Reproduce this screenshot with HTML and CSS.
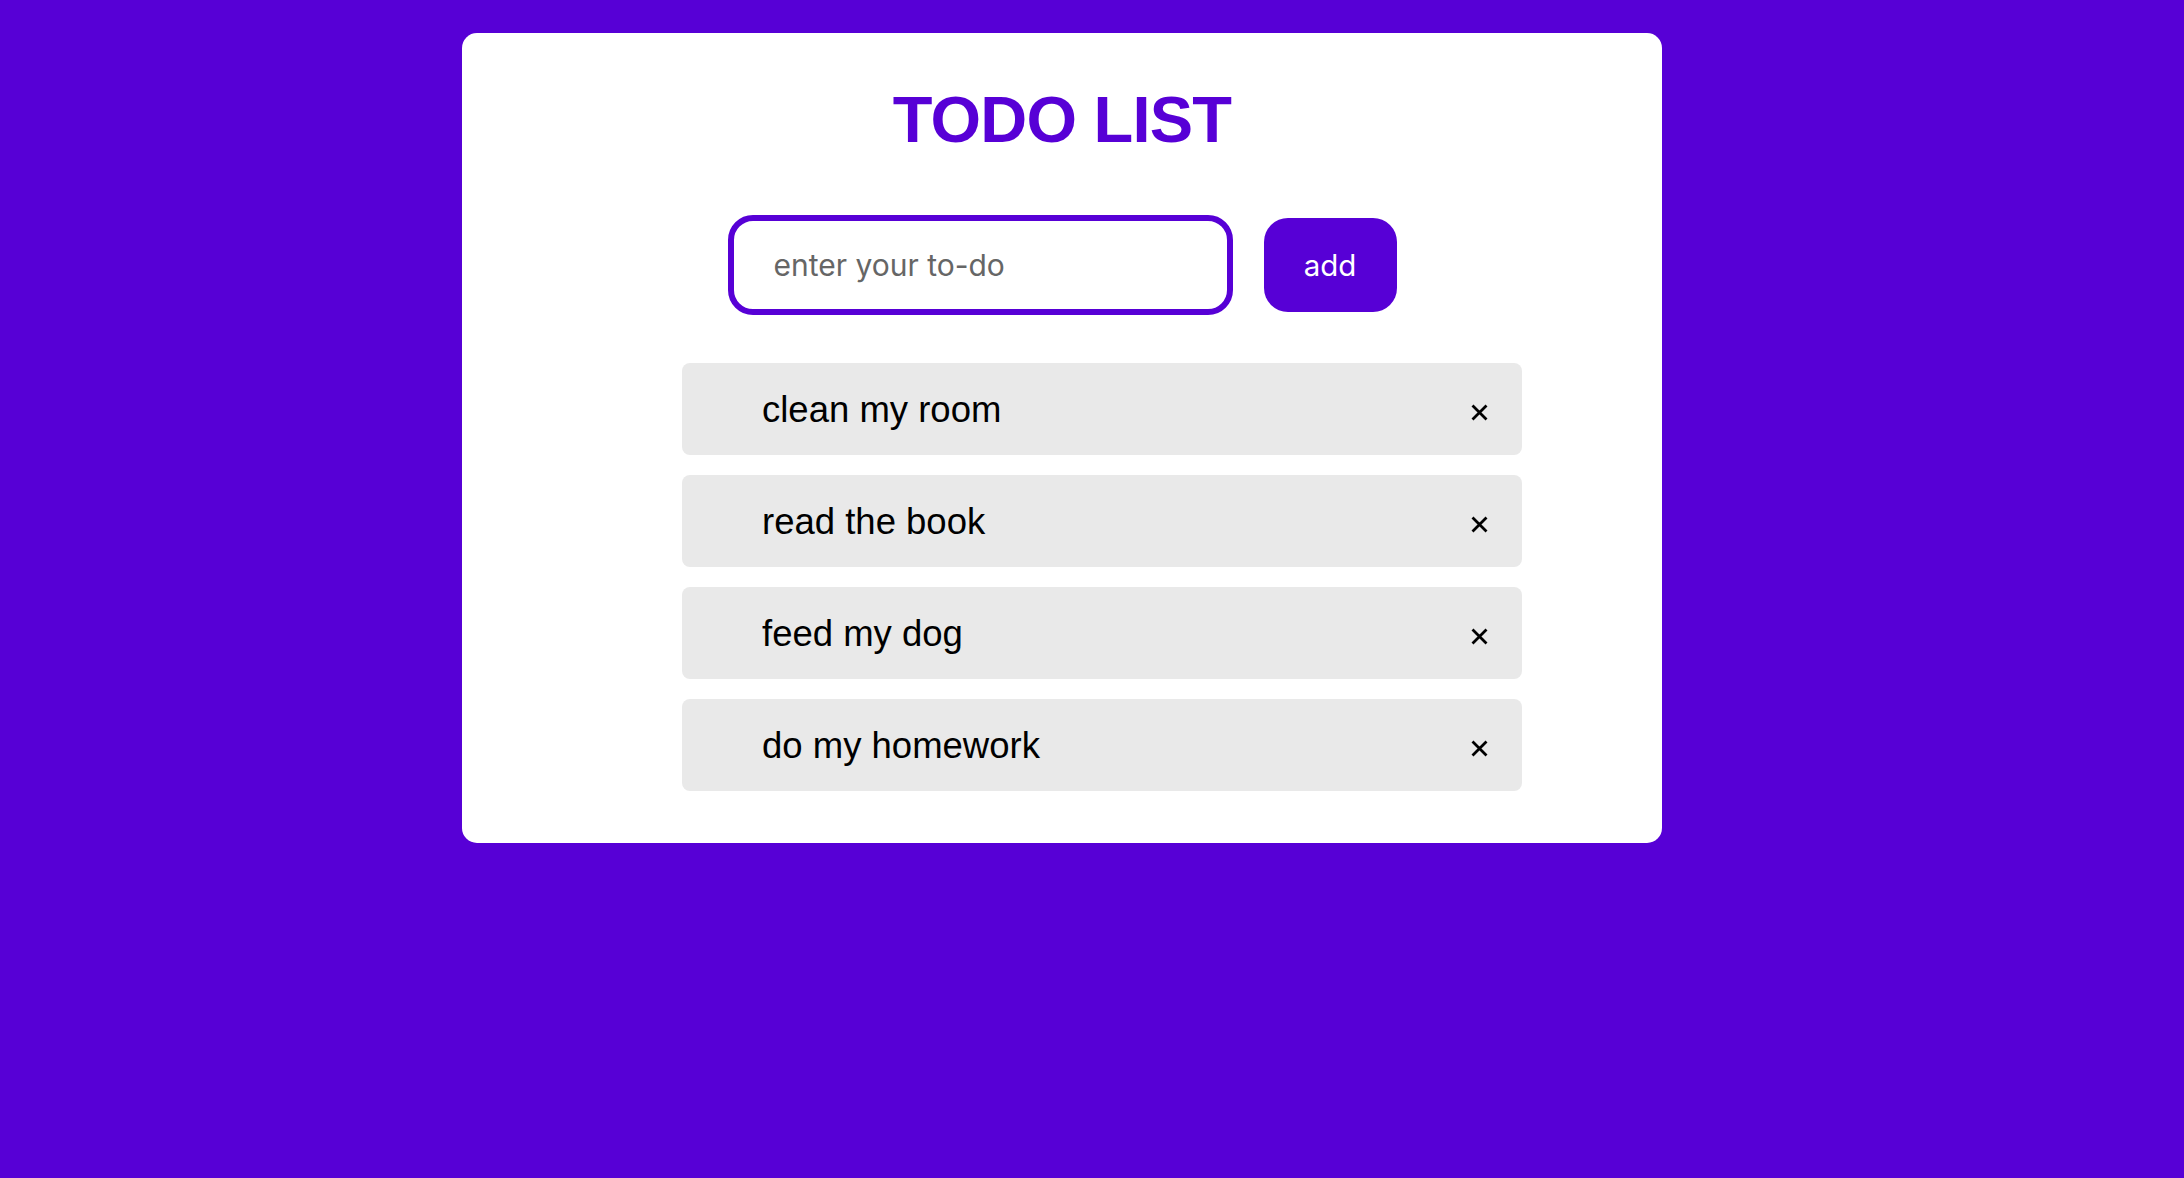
FILE: index.html
```html
<!DOCTYPE html>
<html>
<head>
<meta charset="utf-8">
<title>Todo List</title>
<link rel="stylesheet" href="styles.css">
</head>
<body>
<div class="page">
  <main class="card">
    <h1 class="title">TODO LIST</h1>
    <form class="entry">
      <input class="entry-input" type="text" placeholder="enter your to-do">
      <button class="entry-btn" type="button">add</button>
    </form>
    <ul class="list">
      <li class="item"><span class="item-text">clean my room</span><svg class="item-close" viewBox="0 0 17 17"><path d="M1.5 1.5L15.5 15.5M15.5 1.5L1.5 15.5"/></svg></li>
      <li class="item"><span class="item-text">read the book</span><svg class="item-close" viewBox="0 0 17 17"><path d="M1.5 1.5L15.5 15.5M15.5 1.5L1.5 15.5"/></svg></li>
      <li class="item"><span class="item-text">feed my dog</span><svg class="item-close" viewBox="0 0 17 17"><path d="M1.5 1.5L15.5 15.5M15.5 1.5L1.5 15.5"/></svg></li>
      <li class="item"><span class="item-text">do my homework</span><svg class="item-close" viewBox="0 0 17 17"><path d="M1.5 1.5L15.5 15.5M15.5 1.5L1.5 15.5"/></svg></li>
    </ul>
  </main>
</div>
</body>
</html>
```
FILE: styles.css
```css
html, body {
  margin: 0;
  padding: 0;
  background: #5700d6;
  min-height: 100%;
}
body {
  font-family: "Liberation Sans", Arial, sans-serif;
  height: 1178px;
}
.page {
  padding: 33px 60px 0 0;
}
.card {
  width: 1200px;
  margin: 0 auto;
  box-sizing: border-box;
  background: #ffffff;
  border-radius: 15px;
  padding: 54px 0 52px 0;
  display: flex;
  flex-direction: column;
  align-items: center;
}
.title {
  margin: 0;
  font-size: 65px;
  line-height: 65px;
  font-weight: 700;
  letter-spacing: -0.8px;
  color: #5700d6;
  text-align: center;
}
.entry {
  margin: 63px 0 0 0;
  display: flex;
  align-items: center;
  gap: 31px;
}
.entry-input {
  box-sizing: border-box;
  width: 505px;
  height: 100px;
  border: 6px solid #5700d6;
  border-radius: 25px;
  padding: 0 0 0 40px;
  font-family: Inter, "Noto Sans", sans-serif;
  font-size: 30px;
  color: #222;
  outline: none;
  background: #fff;
}
.entry-input::placeholder {
  color: #666666;
  opacity: 1;
}
.entry-btn {
  box-sizing: border-box;
  width: 133px;
  height: 94px;
  border: none;
  border-radius: 24px;
  background: #5700d6;
  color: #ffffff;
  font-family: Inter, "Noto Sans", sans-serif;
  font-size: 29.5px;
  padding: 0;
  cursor: pointer;
}
.list {
  list-style: none;
  margin: 48px 0 0 0;
  padding: 0 0 0 80px;
  align-self: stretch;
  display: flex;
  flex-direction: column;
  align-items: center;
  gap: 20px;
}
.item {
  box-sizing: border-box;
  width: 840px;
  height: 92px;
  background: #e9e9e9;
  border-radius: 8px;
  display: flex;
  align-items: center;
  justify-content: space-between;
  padding: 0 34px 0 80px;
}
.item-text {
  font-size: 36.5px;
  color: #000000;
  margin-top: 2px;
}
.item-close {
  width: 17px;
  height: 17px;
  margin-top: 7px;
  fill: none;
  stroke: #000;
  stroke-width: 2.8;
  stroke-linecap: butt;
}
```
